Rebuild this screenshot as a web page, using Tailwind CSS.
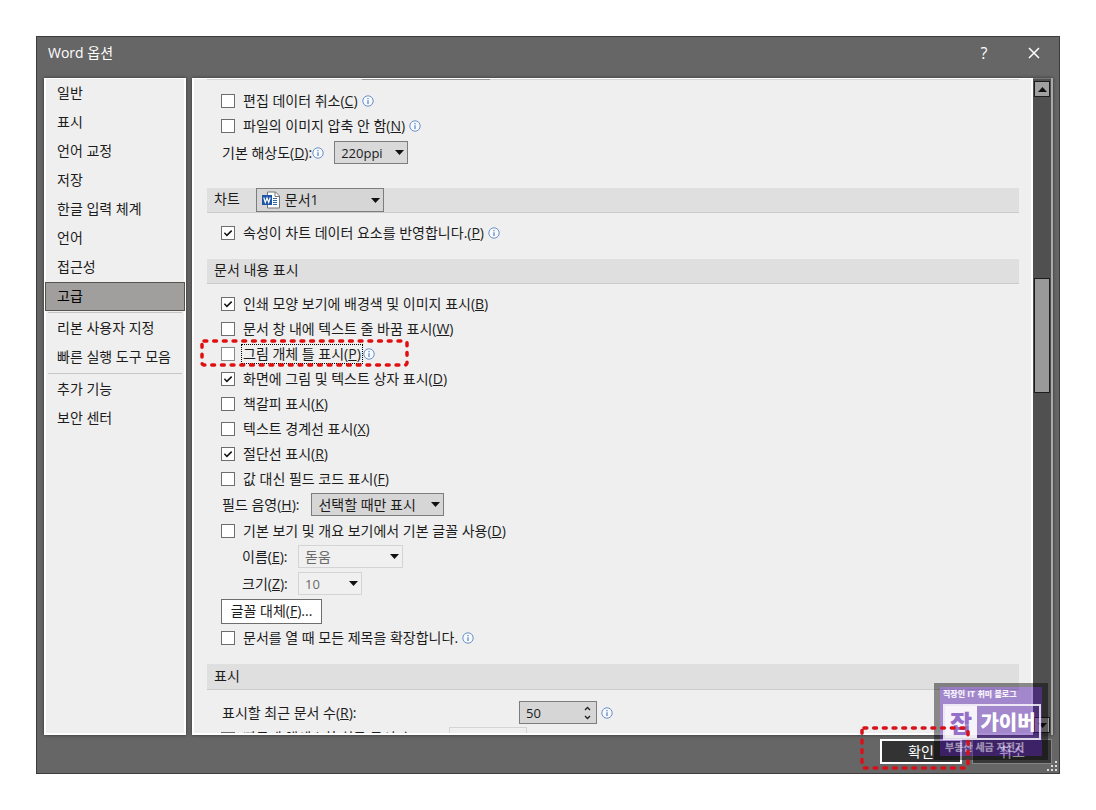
<!DOCTYPE html>
<html lang="ko">
<head>
<meta charset="utf-8">
<title>Word 옵션</title>
<script src="https://cdn.jsdelivr.net/npm/@tailwindcss/browser@4"></script>
</head>
<body class="bg-white font-['Open_Sans','Noto_Sans_CJK_KR',sans-serif] text-sm text-[#1c1c1c]">
<svg class="hidden" aria-hidden="true">
  <symbol id="info" viewBox="0 0 12 12"><circle cx="6" cy="6" r="5.2" fill="#f6f9fd" stroke="#6a8fc8" stroke-width="1"/><path d="M6 5.2v3.8M6 2.9v1.3" stroke="#5580c0" stroke-width="1.2" fill="none"/></symbol>
  <symbol id="tick" viewBox="0 0 14 14"><path d="M3.4 6.8l2.5 2.6 4.8-4.8" fill="none" stroke="#111" stroke-width="1.5"/></symbol>
  <symbol id="arrow" viewBox="0 0 9 5"><path d="M0 0h9L4.500 5z" fill="#111"/></symbol>
</svg>
<div class="h-screen p-9">
<div class="relative flex h-full flex-col border border-[#3c3c3c] bg-[#666]">
  <header class="flex h-[41px] shrink-0 items-center justify-between pr-[13px] pl-[11px] pb-2.5 text-white">
    <h1 class="text-sm">Word 옵션</h1>
    <div class="flex items-center gap-[26px]">
      <button class="grid size-6 place-items-center text-base" aria-label="도움말">?</button>
      <button class="grid size-6 place-items-center" aria-label="닫기"><svg class="size-3" viewBox="0 0 12 12"><path d="M1 1l10 10M11 1L1 11" stroke="#fff" stroke-width="1.5"/></svg></button>
    </div>
  </header>

  <div class="flex min-h-0 flex-1 gap-1.5 pr-1.5 pl-[7px]">
    <nav class="w-[142px] shrink-0 border-2 border-t border-white bg-[#efefef] shadow-[0_0_3px_#333]">
      <button class="block h-[29px] w-full pb-0.5 pl-[11px] text-left">일반</button>
      <button class="block h-[29px] w-full pb-0.5 pl-[11px] text-left">표시</button>
      <button class="block h-[29px] w-full pb-0.5 pl-[11px] text-left">언어 교정</button>
      <button class="block h-[29px] w-full pb-0.5 pl-[11px] text-left">저장</button>
      <button class="block h-[29px] w-full pb-0.5 pl-[11px] text-left">한글 입력 체계</button>
      <button class="block h-[29px] w-full pb-0.5 pl-[11px] text-left">언어</button>
      <button class="block h-[29px] w-full pb-0.5 pl-[11px] text-left">접근성</button>
      <button class="-mx-px block h-[29px] w-[140px] border border-[#55544e] bg-[#a19f9d] pb-0.5 pl-[11px] text-left text-black">고급</button>
      <hr class="mx-0.5 my-px border-[#c6c6c6]">
      <button class="block h-[29px] w-full pb-0.5 pl-[11px] text-left">리본 사용자 지정</button>
      <button class="block h-[29px] w-full pb-0.5 pl-[11px] text-left">빠른 실행 도구 모음</button>
      <hr class="mx-0.5 my-px border-[#c6c6c6]">
      <button class="block h-[29px] w-full pb-0.5 pl-[11px] text-left">추가 기능</button>
      <button class="block h-[29px] w-full pb-0.5 pl-[11px] text-left">보안 센터</button>
    </nav>

    <div class="flex min-w-0 flex-1 border-r-2 border-[#aaa] shadow-[0_0_3px_#333]">
      <main id="options" class="min-w-0 flex-1 overflow-hidden border-2 border-t border-white bg-[#efefef] pr-3 pl-[13px]">
        <div class="mb-2 flex h-px bg-[#d4d4d4]"><div class="ml-[155px] w-32 bg-[#999]"></div></div>

        <div class="pl-3.5">
          <label class="flex h-[25px] items-center gap-2"><span class="grid size-3.5"><input type="checkbox" class="peer col-start-1 row-start-1 size-3.5 appearance-none border border-[#6e6e6e] bg-white"><svg class="invisible col-start-1 row-start-1 size-3.5 peer-checked:visible"><use href="#tick"/></svg></span><span>편집 데이터 취소(<u>C</u>)</span><svg class="-ml-1 size-3"><use href="#info"/></svg></label>
          <label class="flex h-[25px] items-center gap-2"><span class="grid size-3.5"><input type="checkbox" class="peer col-start-1 row-start-1 size-3.5 appearance-none border border-[#6e6e6e] bg-white"><svg class="invisible col-start-1 row-start-1 size-3.5 peer-checked:visible"><use href="#tick"/></svg></span><span>파일의 이미지 압축 안 함(<u>N</u>)</span><svg class="-ml-1 size-3"><use href="#info"/></svg></label>
          <div class="flex h-[29px] items-center pl-px">
            <label for="dpi">기본 해상도(<u>D</u>):</label><svg class="mr-2.5 size-3"><use href="#info"/></svg>
            <span class="grid items-center"><select id="dpi" class="col-start-1 row-start-1 h-[23px] w-[74px] appearance-none border border-[#7d7d7d] bg-[#d9d9d9] pl-1.5 text-[13px] leading-5"><option>220ppi</option></select><svg class="pointer-events-none col-start-1 row-start-1 mr-1 h-[5px] w-[9px] justify-self-end"><use href="#arrow"/></svg></span>
          </div>
        </div>

        <section class="mt-[21px] flex h-[25px] items-center gap-4 border-b border-[#cbcbcb] bg-[#dfdfdf] pl-[7px]">
          <label for="chart" class="pb-0.5">차트</label>
          <span class="grid items-center">
            <select id="chart" class="col-start-1 row-start-1 h-6 w-32 appearance-none border border-[#7d7d7d] bg-[#d6d6d6] pl-7 leading-5"><option>문서1</option></select>
            <svg class="pointer-events-none col-start-1 row-start-1 ml-1.5 size-[18px]" viewBox="0 0 18 18"><path d="M5.500 1h8l4 4v12h-12z" fill="#fff" stroke="#777"/><path d="M13 1v4.500h4" fill="none" stroke="#777"/><path d="M11 7.500h4M11 9.500h4M11 11.500h4M11 13.500h4" stroke="#2b6cb5"/><path d="M0 4h10v10H0z" fill="#1e55a5"/><path d="M1.800 6.500l1.500 5L5 7l1.700 4.500 1.500-5" fill="none" stroke="#fff" stroke-width="1.200"/></svg>
            <svg class="pointer-events-none col-start-1 row-start-1 mr-1 h-[5px] w-[9px] justify-self-end"><use href="#arrow"/></svg>
          </span>
        </section>
        <div class="pt-[7px] pl-3.5">
          <label class="flex h-[25px] items-center gap-2"><span class="grid size-3.5"><input type="checkbox" checked class="peer col-start-1 row-start-1 size-3.5 appearance-none border border-[#6e6e6e] bg-white"><svg class="invisible col-start-1 row-start-1 size-3.5 peer-checked:visible"><use href="#tick"/></svg></span><span>속성이 차트 데이터 요소를 반영합니다.(<u>P</u>)</span><svg class="-ml-1 size-3"><use href="#info"/></svg></label>
        </div>

        <h2 class="mt-3.5 flex h-[25px] items-center border-b border-[#cbcbcb] bg-[#dfdfdf] pb-0.5 pl-[7px]">문서 내용 표시</h2>
        <div class="pt-[7px] pl-3.5">
          <label class="flex h-[25px] items-center gap-2"><span class="grid size-3.5"><input type="checkbox" checked class="peer col-start-1 row-start-1 size-3.5 appearance-none border border-[#6e6e6e] bg-white"><svg class="invisible col-start-1 row-start-1 size-3.5 peer-checked:visible"><use href="#tick"/></svg></span><span>인쇄 모양 보기에 배경색 및 이미지 표시(<u>B</u>)</span></label>
          <label class="flex h-[25px] items-center gap-2"><span class="grid size-3.5"><input type="checkbox" class="peer col-start-1 row-start-1 size-3.5 appearance-none border border-[#6e6e6e] bg-white"><svg class="invisible col-start-1 row-start-1 size-3.5 peer-checked:visible"><use href="#tick"/></svg></span><span>문서 창 내에 텍스트 줄 바꿈 표시(<u>W</u>)</span></label>
          <div class="relative">
            <label class="flex h-[25px] items-center gap-1.5"><span class="grid size-3.5"><input type="checkbox" class="peer col-start-1 row-start-1 size-3.5 appearance-none border border-[#8a8a8a] bg-white"><svg class="invisible col-start-1 row-start-1 size-3.5 peer-checked:visible"><use href="#tick"/></svg></span><span class="border border-dotted border-black px-px leading-[18px]">그림 개체 틀 표시(<u>P</u>)</span><svg class="-ml-1.5 size-3"><use href="#info"/></svg></label>
            <svg class="pointer-events-none absolute -top-0.5 -left-[21px] h-[29px] w-[210px]"><rect x="2" y="2" width="205" height="24" rx="2" fill="none" stroke="#e01010" stroke-width="3.500" stroke-linecap="round" stroke-dasharray="2.800 6.900"/></svg>
          </div>
          <label class="flex h-[25px] items-center gap-2"><span class="grid size-3.5"><input type="checkbox" checked class="peer col-start-1 row-start-1 size-3.5 appearance-none border border-[#6e6e6e] bg-white"><svg class="invisible col-start-1 row-start-1 size-3.5 peer-checked:visible"><use href="#tick"/></svg></span><span>화면에 그림 및 텍스트 상자 표시(<u>D</u>)</span></label>
          <label class="flex h-[25px] items-center gap-2"><span class="grid size-3.5"><input type="checkbox" class="peer col-start-1 row-start-1 size-3.5 appearance-none border border-[#6e6e6e] bg-white"><svg class="invisible col-start-1 row-start-1 size-3.5 peer-checked:visible"><use href="#tick"/></svg></span><span>책갈피 표시(<u>K</u>)</span></label>
          <label class="flex h-[25px] items-center gap-2"><span class="grid size-3.5"><input type="checkbox" class="peer col-start-1 row-start-1 size-3.5 appearance-none border border-[#6e6e6e] bg-white"><svg class="invisible col-start-1 row-start-1 size-3.5 peer-checked:visible"><use href="#tick"/></svg></span><span>텍스트 경계선 표시(<u>X</u>)</span></label>
          <label class="flex h-[25px] items-center gap-2"><span class="grid size-3.5"><input type="checkbox" checked class="peer col-start-1 row-start-1 size-3.5 appearance-none border border-[#6e6e6e] bg-white"><svg class="invisible col-start-1 row-start-1 size-3.5 peer-checked:visible"><use href="#tick"/></svg></span><span>절단선 표시(<u>R</u>)</span></label>
          <label class="flex h-[25px] items-center gap-2"><span class="grid size-3.5"><input type="checkbox" class="peer col-start-1 row-start-1 size-3.5 appearance-none border border-[#6e6e6e] bg-white"><svg class="invisible col-start-1 row-start-1 size-3.5 peer-checked:visible"><use href="#tick"/></svg></span><span>값 대신 필드 코드 표시(<u>F</u>)</span></label>
          <div class="flex h-[27px] items-center gap-3 pl-px">
            <label for="shade">필드 음영(<u>H</u>):</label>
            <span class="grid items-center"><select id="shade" class="col-start-1 row-start-1 h-[23px] w-[133px] appearance-none border border-[#7d7d7d] bg-[#d6d6d6] pl-1.5 leading-5"><option>선택할 때만 표시</option></select><svg class="pointer-events-none col-start-1 row-start-1 mr-1 h-[5px] w-[9px] justify-self-end"><use href="#arrow"/></svg></span>
          </div>
          <label class="flex h-[25px] items-center gap-2"><span class="grid size-3.5"><input type="checkbox" class="peer col-start-1 row-start-1 size-3.5 appearance-none border border-[#6e6e6e] bg-white"><svg class="invisible col-start-1 row-start-1 size-3.5 peer-checked:visible"><use href="#tick"/></svg></span><span>기본 보기 및 개요 보기에서 기본 글꼴 사용(<u>D</u>)</span></label>
          <div class="flex h-[27px] items-center pl-[21px]">
            <label for="fname" class="w-14">이름(<u>E</u>):</label>
            <span class="grid items-center"><select id="fname" disabled class="col-start-1 row-start-1 h-[23px] w-[105px] appearance-none border border-[#d4d4d4] bg-[#f0f0f0] pl-1.5 leading-5 text-[#6a6a6a] opacity-100"><option>돋움</option></select><svg class="pointer-events-none col-start-1 row-start-1 mr-1 h-[5px] w-[9px] justify-self-end"><use href="#arrow"/></svg></span>
          </div>
          <div class="flex h-[27px] items-center pl-[21px]">
            <label for="fsize" class="w-14">크기(<u>Z</u>):</label>
            <span class="grid items-center"><select id="fsize" disabled class="col-start-1 row-start-1 h-[23px] w-16 appearance-none border border-[#d4d4d4] bg-[#f0f0f0] pl-1.5 text-[13px] leading-5 text-[#6a6a6a] opacity-100"><option>10</option></select><svg class="pointer-events-none col-start-1 row-start-1 mr-1 h-[5px] w-[9px] justify-self-end"><use href="#arrow"/></svg></span>
          </div>
          <div class="flex h-7 items-center"><button class="h-[25px] w-[101px] border border-[#6e6e6e] bg-white leading-5">글꼴 대체(<u>F</u>)...</button></div>
          <label class="flex h-[25px] items-center gap-2"><span class="grid size-3.5"><input type="checkbox" class="peer col-start-1 row-start-1 size-3.5 appearance-none border border-[#6e6e6e] bg-white"><svg class="invisible col-start-1 row-start-1 size-3.5 peer-checked:visible"><use href="#tick"/></svg></span><span>문서를 열 때 모든 제목을 확장합니다.</span><svg class="-ml-1 size-3"><use href="#info"/></svg></label>
        </div>

        <h2 class="mt-3.5 flex h-[26px] items-center border-b border-[#cbcbcb] bg-[#dfdfdf] pb-0.5 pl-[7px]">표시</h2>
        <div class="pt-2.5 pl-3.5">
          <div class="flex h-[25px] items-center pl-px">
            <label for="recent" class="w-[297px]">표시할 최근 문서 수(<u>R</u>):</label>
            <span class="grid items-center"><input id="recent" type="text" value="50" class="col-start-1 row-start-1 h-[23px] w-[78px] border border-[#7d7d7d] bg-[#d6d6d6] pl-1.5 text-[13px]"><svg class="col-start-1 row-start-1 mr-1.5 h-3.5 w-[7px] justify-self-end" viewBox="0 0 7 14"><path d="M1 4l2.500-2.500L6 4M1 10l2.500 2.500L6 10" fill="none" stroke="#222" stroke-width="1.400"/></svg></span>
            <svg class="ml-1 size-3"><use href="#info"/></svg>
          </div>
          <div class="flex h-[27px] items-center">
            <label class="flex w-[228px] items-center gap-2"><span class="grid size-3.5"><input type="checkbox" class="peer col-start-1 row-start-1 size-3.5 appearance-none border border-[#6e6e6e] bg-white"></span><span class="pb-0.5">빠르게 액세스할 최근 문서 수(<u>Q</u>):</span></label>
            <input type="text" aria-label="빠른 액세스 문서 수" disabled class="h-[23px] w-[78px] border border-[#d4d4d4] bg-[#f0f0f0]">
          </div>
        </div>
      </main>

      <div class="flex w-[18px] shrink-0 flex-col border-t border-[#777] bg-[#505050] px-px pt-0.5" role="scrollbar" aria-controls="options" aria-valuenow="60">
        <button class="grid h-4 w-full place-items-center border border-[#1c1c1c] bg-[#a0a0a0]" aria-label="위로"><svg class="h-[5px] w-[9px] rotate-180"><use href="#arrow"/></svg></button>
        <div class="h-[181px]"></div>
        <div class="h-[115px] border border-[#1c1c1c] bg-[#999]"></div>
        <div class="flex-1"></div>
        <button class="mb-0.5 grid h-4 w-full place-items-center border border-[#1c1c1c] bg-[#a0a0a0]" aria-label="아래로"><svg class="h-[5px] w-[9px]"><use href="#arrow"/></svg></button>
      </div>
    </div>
  </div>

  <footer class="flex h-[38px] shrink-0 items-start justify-end gap-2.5 pt-1 pr-[7px]">
    <button class="h-[25px] w-[82px] border-2 border-white bg-[#333] leading-5 text-white">확인</button>
    <button class="h-[25px] w-20 border border-[#858585] bg-[#383838] leading-5 text-white">취소</button>
  </footer>
  <svg class="absolute right-0.5 bottom-0.5 size-2.5" viewBox="0 0 10 10" fill="#ddd"><path d="M8 0h2v2H8zM4 4h2v2H4zM8 4h2v2H8zM0 8h2v2H0zM4 8h2v2H4zM8 8h2v2H8z"/></svg>

  <div class="pointer-events-none absolute right-[11px] bottom-[13px] h-[77px] w-[114px] border-x-[6px] border-y-4 border-black/43 font-['Noto_Sans_CJK_KR',sans-serif] font-black">
    <div class="h-full bg-[#4609a4]/45 pl-[3px]">
      <p class="h-[17px] text-[8px] leading-[14px] text-white/90">직장인 IT 취미 블로그</p>
      <div class="flex h-[36px] w-[98px] border-2 border-white/80">
        <span class="w-8 bg-white/90 text-center text-2xl leading-8 text-[#9470c8]">잡</span>
        <span class="flex-1 text-center text-xl leading-8 whitespace-nowrap text-white">가이버</span>
      </div>
      <p class="pl-0.5 text-[10px] leading-[13px] whitespace-nowrap text-white/50">부동산 세금 자전거</p>
    </div>
  </div>
  <svg class="pointer-events-none absolute right-[88px] bottom-0.5 h-[46px] w-[112px]"><rect x="3" y="3" width="106" height="40" rx="2" fill="none" stroke="#d81018" stroke-width="3.500" stroke-linecap="round" stroke-dasharray="2.800 6.900"/></svg>
</div>
</div>
</body>
</html>
